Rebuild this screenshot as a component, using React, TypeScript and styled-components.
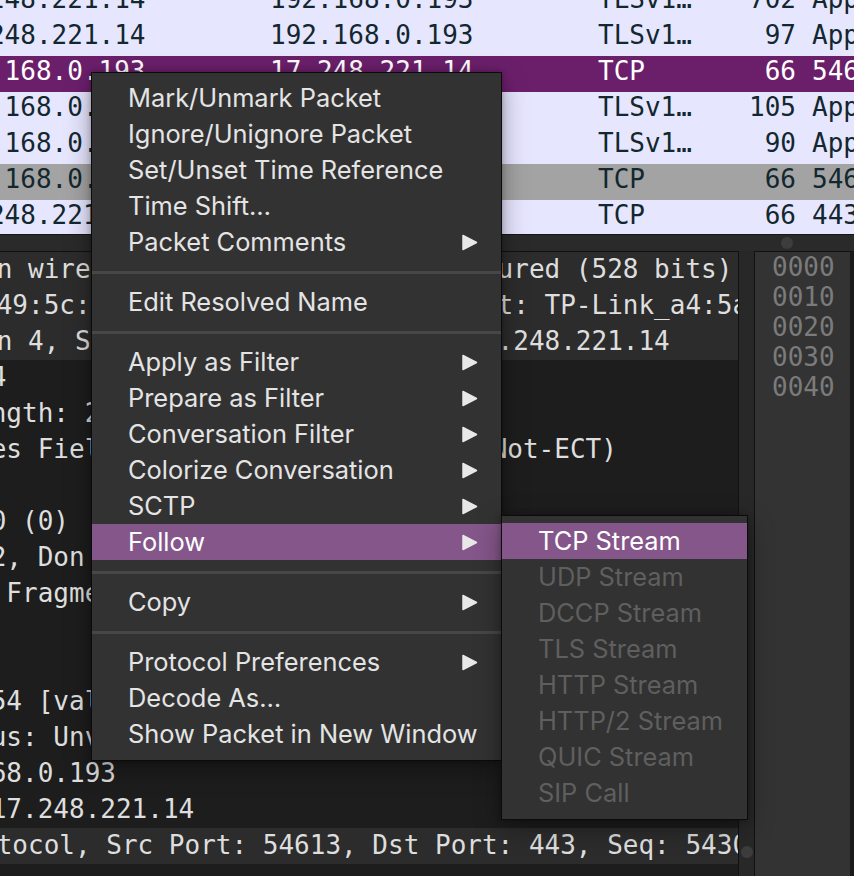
import { createGlobalStyle, styled } from "styled-components";

const GlobalStyle = createGlobalStyle`
  html, body {
    margin: 0;
    padding: 0;
    background: #2a2a2a;
    overflow: hidden;
  }
  * {
    box-sizing: border-box;
  }
`;

const MONO = `"DejaVu Sans Mono", "Liberation Mono", monospace`;
const SANS = `Inter, "Noto Sans", "Liberation Sans", sans-serif`;

const Page = styled.div`
  position: relative;
  width: 854px;
  height: 876px;
  display: flex;
  flex-direction: column;
  overflow: hidden;
  background: #2a2a2a;
  font-family: ${MONO};
  font-size: 26px;
`;

// packet list (top pane), scrolled a little to the right
const PacketList = styled.div`
  height: 235px;
  flex: none;
  overflow: hidden;
  background: #e7e6ff;
  border-bottom: 1px solid #161616;
`;

const PacketScroll = styled.div`
  margin-top: -16px;
  margin-left: -58px;
`;

type Tone = "normal" | "selected" | "marked";

const PacketRow = styled.div<{ $tone: Tone }>`
  display: grid;
  grid-template-columns: 328px 328px 110px 88px 1fr;
  height: 36px;
  line-height: 30px;
  white-space: pre;
  color: ${(p) => (p.$tone === "selected" ? "#ffffff" : "#12272e")};
  background: ${(p) =>
    p.$tone === "selected" ? "#6b1f6b" : p.$tone === "marked" ? "#a3a3a3" : "#e7e6ff"};
`;

const Cell = styled.span<{ $right?: boolean }>`
  overflow: hidden;
  text-align: ${(p) => (p.$right ? "right" : "left")};
`;

const InfoCell = styled.span`
  padding-left: 16px;
  overflow: hidden;
`;

// horizontal splitter with grab dot
const HSplit = styled.div`
  height: 16px;
  flex: none;
  display: flex;
  align-items: center;
  padding-left: 781px;
  background: #2a2a2a;
`;

const Dot = styled.div`
  width: 12px;
  height: 12px;
  border-radius: 50%;
  background: #3d3d3d;
`;

const Lower = styled.div`
  flex: 1;
  display: flex;
  min-height: 0;
`;

const Details = styled.div`
  width: 739px;
  flex: none;
  overflow: hidden;
  background: #1d1d1d;
  border-top: 1px solid #111111;
  border-right: 1px solid #111111;
`;

const DetailScroll = styled.div`
  margin-left: -379px;
`;

const DetailRow = styled.div<{ $level: number }>`
  height: 36px;
  line-height: 35px;
  white-space: pre;
  color: #dedede;
  padding-left: ${(p) => p.$level * 41}px;
  background: ${(p) => (p.$level === 0 ? "#2c2c2c" : "transparent")};
  width: 1400px;
`;

const VSplit = styled.div`
  width: 15px;
  flex: none;
  display: flex;
  flex-direction: column;
  justify-content: flex-end;
  align-items: center;
  padding-bottom: 18px;
  background: #282828;
`;

const Hex = styled.div`
  flex: 1;
  background: #333333;
  border-top: 1px solid #111111;
  border-left: 1px solid #111111;
  border-right: 4px solid #1a1a1a;
  padding-left: 17px;
  color: #7b7b7b;
  line-height: 30px;
`;

// context menu
const Menu = styled.div<{ $x: number; $y: number; $w: number }>`
  position: absolute;
  left: ${(p) => p.$x}px;
  top: ${(p) => p.$y}px;
  width: ${(p) => p.$w}px;
  padding: 7px 0 8px;
  background: #323232;
  border: 1px solid #0b0b0b;
  box-shadow: 0 8px 24px rgba(0, 0, 0, 0.35), 0 0 6px rgba(0, 0, 0, 0.25);
  font-family: ${SANS};
  font-size: 25.4px;
`;

const Item = styled.div<{ $active?: boolean; $disabled?: boolean }>`
  height: 36px;
  line-height: 36px;
  display: flex;
  align-items: center;
  justify-content: space-between;
  padding: 0 23px 0 36px;
  white-space: nowrap;
  color: ${(p) => (p.$active ? "#ffffff" : p.$disabled ? "#5f5f5f" : "#e4e4e4")};
  background: ${(p) => (p.$active ? "#84568a" : "transparent")};
`;

const Separator = styled.div`
  height: 24px;
  display: flex;
  align-items: center;

  &::after {
    content: "";
    flex: 1;
    height: 3px;
    background: #474747;
  }
`;

const Arrow = () => (
  <svg width="17" height="17" viewBox="0 0 17 17">
    <path d="M2 1.5 L15.5 8.5 L2 15.5 Z" fill="#e8e8e8" stroke="#e8e8e8" strokeWidth="1.5" strokeLinejoin="round" />
  </svg>
);

const packets: { src: string; dst: string; proto: string; len: string; info: string; tone: Tone }[] = [
  { src: "17.248.221.14", dst: "192.168.0.193", proto: "TLSv1…", len: "702", info: "Application Data", tone: "normal" },
  { src: "17.248.221.14", dst: "192.168.0.193", proto: "TLSv1…", len: "97", info: "Application Data", tone: "normal" },
  { src: "192.168.0.193", dst: "17.248.221.14", proto: "TCP", len: "66", info: "54613 → 443 [ACK] Seq=5430", tone: "selected" },
  { src: "192.168.0.193", dst: "17.248.221.14", proto: "TLSv1…", len: "105", info: "Application Data", tone: "normal" },
  { src: "192.168.0.193", dst: "17.248.221.14", proto: "TLSv1…", len: "90", info: "Application Data", tone: "normal" },
  { src: "192.168.0.193", dst: "17.248.221.14", proto: "TCP", len: "66", info: "54613 → 443 [ACK] Seq=5519", tone: "marked" },
  { src: "17.248.221.14", dst: "192.168.0.193", proto: "TCP", len: "66", info: "443 → 54613 [ACK] Seq=1", tone: "normal" },
];

const details: { text: string; level: number }[] = [
  { text: "Frame 104873: 66 bytes on wire (528 bits), 66 bytes captured (528 bits) on interface en0, id 0", level: 0 },
  { text: "Ethernet II, Src: Apple_49:5c:1e (f0:18:98:49:5c:1e), Dst: TP-Link_a4:5a:3c (50:c7:bf:a4:5a:3c)", level: 0 },
  { text: "Internet Protocol Version 4, Src: 192.168.0.193, Dst: 17.248.221.14", level: 0 },
  { text: "0100 .... = Version: 4", level: 1 },
  { text: ".... 0101 = Header Length: 20 bytes (5)", level: 1 },
  { text: "Differentiated Services Field: 0x00 (DSCP: CS0, ECN: Not-ECT)", level: 1 },
  { text: "Total Length: 52", level: 1 },
  { text: "Identification: 0x0000 (0)", level: 1 },
  { text: "010. .... = Flags: 0x2, Don't fragment", level: 1 },
  { text: "...0 0000 0000 0000 = Fragment Offset: 0", level: 1 },
  { text: "Time to Live: 64", level: 1 },
  { text: "Protocol: TCP (6)", level: 1 },
  { text: "Header Checksum: 0x1f54 [validation disabled]", level: 1 },
  { text: "[Header checksum status: Unverified]", level: 1 },
  { text: "Source Address: 192.168.0.193", level: 1 },
  { text: "Destination Address: 17.248.221.14", level: 1 },
  { text: "Transmission Control Protocol, Src Port: 54613, Dst Port: 443, Seq: 5430, Ack: 9921, Len: 0", level: 0 },
];

const offsets = ["0000", "0010", "0020", "0030", "0040"];

type Entry = { label: string; sub?: boolean; active?: boolean; disabled?: boolean };

const menuGroups: Entry[][] = [
  [
    { label: "Mark/Unmark Packet" },
    { label: "Ignore/Unignore Packet" },
    { label: "Set/Unset Time Reference" },
    { label: "Time Shift…" },
    { label: "Packet Comments", sub: true },
  ],
  [{ label: "Edit Resolved Name" }],
  [
    { label: "Apply as Filter", sub: true },
    { label: "Prepare as Filter", sub: true },
    { label: "Conversation Filter", sub: true },
    { label: "Colorize Conversation", sub: true },
    { label: "SCTP", sub: true },
    { label: "Follow", sub: true, active: true },
  ],
  [{ label: "Copy", sub: true }],
  [
    { label: "Protocol Preferences", sub: true },
    { label: "Decode As…" },
    { label: "Show Packet in New Window" },
  ],
];

const followItems: Entry[] = [
  { label: "TCP Stream", active: true },
  { label: "UDP Stream", disabled: true },
  { label: "DCCP Stream", disabled: true },
  { label: "TLS Stream", disabled: true },
  { label: "HTTP Stream", disabled: true },
  { label: "HTTP/2 Stream", disabled: true },
  { label: "QUIC Stream", disabled: true },
  { label: "SIP Call", disabled: true },
];

function MenuItem({ entry }: { entry: Entry }) {
  return (
    <Item $active={entry.active} $disabled={entry.disabled}>
      <span>{entry.label}</span>
      {entry.sub ? <Arrow /> : null}
    </Item>
  );
}

export default function App() {
  return (
    <Page>
      <GlobalStyle />
      <PacketList>
        <PacketScroll>
          {packets.map((p, i) => (
            <PacketRow key={i} $tone={p.tone}>
              <Cell>{p.src}</Cell>
              <Cell>{p.dst}</Cell>
              <Cell>{p.proto}</Cell>
              <Cell $right>{p.len}</Cell>
              <InfoCell>{p.info}</InfoCell>
            </PacketRow>
          ))}
        </PacketScroll>
      </PacketList>

      <HSplit>
        <Dot />
      </HSplit>

      <Lower>
        <Details>
          <DetailScroll>
            {details.map((d, i) => (
              <DetailRow key={i} $level={d.level}>
                {d.text}
              </DetailRow>
            ))}
          </DetailScroll>
        </Details>
        <VSplit>
          <Dot />
        </VSplit>
        <Hex>
          {offsets.map((o) => (
            <div key={o}>{o}</div>
          ))}
        </Hex>
      </Lower>

      <Menu $x={91} $y={72} $w={411}>
        {menuGroups.map((group, gi) => (
          <div key={gi}>
            {gi > 0 ? <Separator /> : null}
            {group.map((entry) => (
              <MenuItem key={entry.label} entry={entry} />
            ))}
          </div>
        ))}
      </Menu>

      <Menu $x={501} $y={515} $w={247}>
        {followItems.map((entry) => (
          <MenuItem key={entry.label} entry={entry} />
        ))}
      </Menu>
    </Page>
  );
}
